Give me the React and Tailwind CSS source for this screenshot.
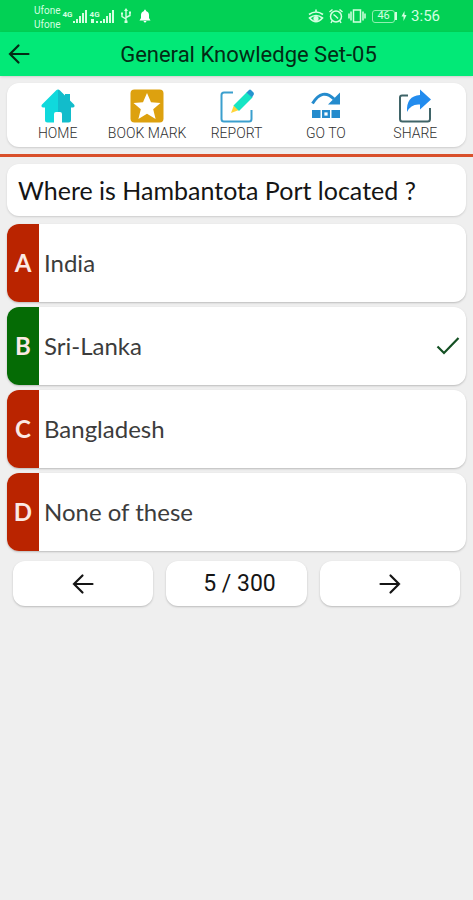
// ============================================================
//  App.jsx
//  Quiz screen: status bar, title bar, action toolbar,
//  one question with four options, and the pager.
// ============================================================

// ── React hook
import { useState } from 'react';

// ── Toolbar icons
function HomeIcon() {
  return (
    <svg viewBox="0 0 34 34" className="h-[34px] w-[34px]" aria-hidden="true">
      <path d="M17 .5 Q18 .5 19 1.500 L24 6.500 V5 H29 V11.500 L33 15.500 Q34.500 18 32 18.500 H30 V31 Q30 33.500 27.500 33.500 H21 V25 Q21 23 19 23 H17 Z" fill="#12bccb" />
      <path d="M17 .5 Q16 .5 15 1.500 L1 15.500 Q-.5 18 2 18.500 H4 V31 Q4 33.500 6.500 33.500 H13 V25 Q13 23 15 23 H17 Z" fill="#10d9dc" />
    </svg>
  );
}

function BookmarkIcon() {
  return (
    <svg viewBox="0 0 34 34" className="h-[34px] w-[34px]" aria-hidden="true">
      <rect x=".5" y=".5" width="33" height="33" rx="4" fill="#dda10f" />
      <path d="M17 4 L21 13.200 L30.500 14 L23.200 20.300 L25.600 30 L17 24.800 L8.400 30 L10.800 20.300 L3.500 14 L13 13.200 Z" fill="#fff" />
    </svg>
  );
}

function ReportIcon() {
  return (
    <svg viewBox="0 0 34 34" className="h-[34px] w-[34px]" aria-hidden="true">
      <path d="M13 3.500 H4 Q1.500 3.500 1.500 6 V30 Q1.500 32.500 4 32.500 H29 Q31.500 32.500 31.500 30 V21" fill="none" stroke="#3b9fce" strokeWidth="2" />
      <path d="M14 16 L19 21 L11 24 Z" fill="#ffd43a" />
      <path d="M13.500 16.500 L27 3 L32.500 8.500 L19 22 Z" fill="#16e5c4" />
      <path d="M26.500 3.500 L29 1 Q30 .2 31 1 L33.500 3.500 Q34.300 4.500 33.500 6 L32 8.500 Z" fill="#2694cf" />
    </svg>
  );
}

function GoToIcon() {
  return (
    <svg viewBox="0 0 34 34" className="h-[34px] w-[34px]" aria-hidden="true">
      <path d="M3.500 14.500 Q13.500 -1.500 25 10" fill="none" stroke="#248bcd" strokeWidth="3" />
      <path d="M31 3.500 V15.500 H19 Z" fill="#248bcd" />
      <path d="M3 21 H11.500 V29 H3 Z M22.500 21 H31 V29 H22.500 Z" fill="#248bcd" />
      <rect x="14.200" y="22.200" width="5.600" height="5.600" fill="none" stroke="#248bcd" strokeWidth="2.400" />
    </svg>
  );
}

function ShareIcon() {
  return (
    <svg viewBox="0 0 34 34" className="h-[34px] w-[34px]" aria-hidden="true">
      <path d="M10 6.500 H4 Q2 6.500 2 8.500 V30 Q2 32.500 4.500 32.500 H29.500 Q32 32.500 32 30 V19" fill="none" stroke="#3f6468" strokeWidth="2" />
      <path d="M22 .5 L33 10.500 L22 20.500 V15.500 Q13 14.500 9 23 Q8 7 22 6 Z" fill="#238cee" />
    </svg>
  );
}

// ── Thin arrow shared by the title bar and the pager
function Arrow({ right = false }) {
  return (
    <svg
      viewBox="0 0 24 24"
      className={`h-6 w-6 ${right ? 'rotate-180' : ''}`}
      fill="none"
      stroke="currentColor"
      strokeWidth="2.200"
      strokeLinecap="round"
      aria-hidden="true"
    >
      <path d="M21.500 12 H3 M11.500 3.500 L3 12 L11.500 20.500" />
    </svg>
  );
}

// ── Cell signal with the small "4G" mark; dots sit under the mark
function Signal({ label, dots = false }) {
  return (
    <div className="flex items-end">
      <div className="flex flex-col items-center">
        <span className="text-[8px] leading-2 font-bold">{label}</span>
        <svg viewBox="0 0 9 5" className="h-[5px] w-[9px]" fill="currentColor" aria-hidden="true">
          {dots && <path d="M1 0 h3 v4 h-3z M6 2 h2 v2 h-2z" />}
        </svg>
      </div>
      <svg viewBox="0 0 15 15" className="h-[15px] w-[15px]" fill="currentColor" aria-hidden="true">
        <path d="M0 12 h2 v2 h-2z M3 10 h2 v4 h-2z M6 7 h2 v7 h-2z M9 4 h2 v10 h-2z M12 1 h2 v13 h-2z" />
      </svg>
    </div>
  );
}

// ============================================================
//  STATUS BAR
// ============================================================
function StatusBar() {
  return (
    <div className="flex h-8 items-center justify-between bg-[#02d155] pr-[33px] pl-[34px] text-[#d3ffe0]">
      <div className="flex items-center gap-0.5">
        <div className="pt-1 text-[10px] leading-[14px]">
          <p>Ufone</p>
          <p>Ufone</p>
        </div>
        <Signal label="4G" />
        <Signal label="4G" dots />
        {/* USB */}
        <svg viewBox="0 0 14 16" className="ml-0.5 h-4 w-3.5" fill="none" stroke="currentColor" strokeWidth="1.400" aria-hidden="true">
          <path d="M7 2 V13 M7 11 L3 8.500 V5.500 M7 9.500 L11 7.500 V4.500" />
          <path d="M7 0 L9 3 H5 Z M5.500 12.500 h3 v2.500 h-3z M2 4.500 h2 v2 h-2z M10 3.500 h2 v2 h-2z" fill="currentColor" stroke="none" />
        </svg>
        {/* Bell */}
        <svg viewBox="0 0 12 14" className="ml-1 h-3.5 w-3" fill="#ffffff" aria-hidden="true">
          <path d="M6 .5 Q7 .5 7 2 Q10 3 10 6 V9 L11.500 11.500 H.5 L2 9 V6 Q2 3 5 2 Q5 .5 6 .5 Z M4.500 12 h3 q-.5 1.500 -1.500 1.500 t-1.500 -1.500z" />
        </svg>
      </div>

      <div className="flex items-center gap-1">
        {/* Eye comfort */}
        <svg viewBox="0 0 16 16" className="h-4 w-4" fill="none" stroke="currentColor" strokeWidth="1.600" aria-hidden="true">
          <path d="M1 6.500 Q8 1.500 15 6.500 M1.500 10 Q8 5 14.500 10 Q8 17.500 1.500 10 Z M8 4 V1.500" />
          <circle cx="8" cy="10.500" r="1.800" fill="currentColor" />
        </svg>
        {/* Alarm */}
        <svg viewBox="0 0 16 16" className="h-4 w-4" fill="none" stroke="currentColor" strokeWidth="1.500" aria-hidden="true">
          <circle cx="8" cy="8.500" r="5.500" />
          <path d="M5.500 6.500 L8 8.500 L10 10.500 M1.500 4 L4.500 1.500 M14.500 4 L11.500 1.500 M4 13 L3 15 M12 13 L13 15" />
        </svg>
        {/* Vibrate */}
        <svg viewBox="0 0 18 16" className="h-4 w-[18px]" fill="none" stroke="currentColor" strokeWidth="1.500" aria-hidden="true">
          <path d="M5.500 2 H12.500 V14 H5.500 Z M3 3.500 V12.500 M15 3.500 V12.500 M1 5.500 V10.500 M17 5.500 V10.500" />
        </svg>
        {/* Battery */}
        <div className="ml-0.5 flex items-center">
          <span className="flex h-[13px] w-[23px] items-center justify-center rounded-[3px] border border-[#8ff0b0] text-[11px] leading-3">46</span>
          <span className="h-2 w-0.5 bg-current" />
        </div>
        <svg viewBox="0 0 6 10" className="h-2.5 w-1.5" fill="currentColor" aria-hidden="true">
          <path d="M3.500 0 L.5 5.500 H2.500 V10 L5.500 4 H3.500 Z" />
        </svg>
        <span className="text-[15px] leading-4">3:56</span>
      </div>
    </div>
  );
}

const ACTIONS = [
  { label: 'HOME', Icon: HomeIcon },
  { label: 'BOOK MARK', Icon: BookmarkIcon },
  { label: 'REPORT', Icon: ReportIcon },
  { label: 'GO TO', Icon: GoToIcon },
  { label: 'SHARE', Icon: ShareIcon },
];

const OPTIONS = [
  { letter: 'A', text: 'India' },
  { letter: 'B', text: 'Sri-Lanka' },
  { letter: 'C', text: 'Bangladesh' },
  { letter: 'D', text: 'None of these' },
];

export default function App() {

  const [selected, setSelected] = useState('B');

  // ============================================================
  //  RENDER
  // ============================================================
  return (
    <div className="min-h-screen bg-[#efefef] font-[Roboto,sans-serif] text-[#151515]">
      <StatusBar />

      {/* ── Title bar ── */}
      <header className="flex h-11 items-center bg-[#02e977] px-[7px] shadow-sm">
        <button type="button" aria-label="Back" className="text-[#032b15]">
          <Arrow />
        </button>
        <h1 className="flex-1 pt-0.5 text-center text-[22px] leading-7 text-[#032b15]">General Knowledge Set-05</h1>
      </header>

      {/* ── Toolbar ── */}
      <nav className="mx-[7px] mt-[7px] flex rounded-xl bg-white px-1.5 pt-1.5 pb-1.5 shadow-[0_1px_2px_#cccccc]">
        {ACTIONS.map(({ label, Icon }) => (
          <button key={label} type="button" className="flex flex-1 flex-col items-center gap-0.5">
            <Icon />
            <span className="text-sm leading-4 font-light whitespace-nowrap text-[#303030]">{label}</span>
          </button>
        ))}
      </nav>

      <hr className="mt-[7px] border-t-3 border-[#d9502b]" />

      {/* ── Question and options ── */}
      <main className="px-[7px] pt-[7px] font-[Lato,sans-serif]">
        <h2 className="rounded-xl bg-white px-[11px] py-3 text-[25px] leading-7 shadow-[0_1px_2px_#cccccc]">
          Where is Hambantota Port located ?
        </h2>

        <div className="mt-2 flex flex-col gap-[5px]">
          {OPTIONS.map(({ letter, text }) => (
            <button
              key={letter}
              type="button"
              onClick={() => setSelected(letter)}
              className="flex h-[78px] items-center overflow-hidden rounded-xl bg-white pr-1.5 text-left shadow-[0_1px_2px_#bbbbbb]"
            >
              <span
                className={`flex w-8 items-center justify-center self-stretch text-2xl font-bold text-[#fbe9e4] ${
                  selected === letter ? 'bg-[#056b05]' : 'bg-[#ba2400]'
                }`}
              >
                {letter}
              </span>
              <span className="flex-1 pl-[5px] text-2xl leading-7 text-[#3c3c3c]">{text}</span>
              {selected === letter && (
                <svg viewBox="0 0 24 24" className="h-6 w-6" fill="none" stroke="#145023" strokeWidth="2.200" aria-label="Correct">
                  <path d="M1.500 12.500 L8 19 L22.500 4" />
                </svg>
              )}
            </button>
          ))}
        </div>
      </main>

      {/* ── Pager ── */}
      <footer className="mt-2.5 grid grid-cols-3 gap-[13px] px-[13px] pb-4">
        <button type="button" aria-label="Previous" className="flex h-[45px] items-center justify-center rounded-xl bg-white shadow-[0_1px_2px_#bbbbbb]">
          <Arrow />
        </button>
        <p className="flex h-[45px] items-center justify-center rounded-xl bg-white pt-0.5 pl-1.5 text-[23px] shadow-[0_1px_2px_#bbbbbb]">
          5 / 300
        </p>
        <button type="button" aria-label="Next" className="flex h-[45px] items-center justify-center rounded-xl bg-white shadow-[0_1px_2px_#bbbbbb]">
          <Arrow right />
        </button>
      </footer>
    </div>
  );
}
